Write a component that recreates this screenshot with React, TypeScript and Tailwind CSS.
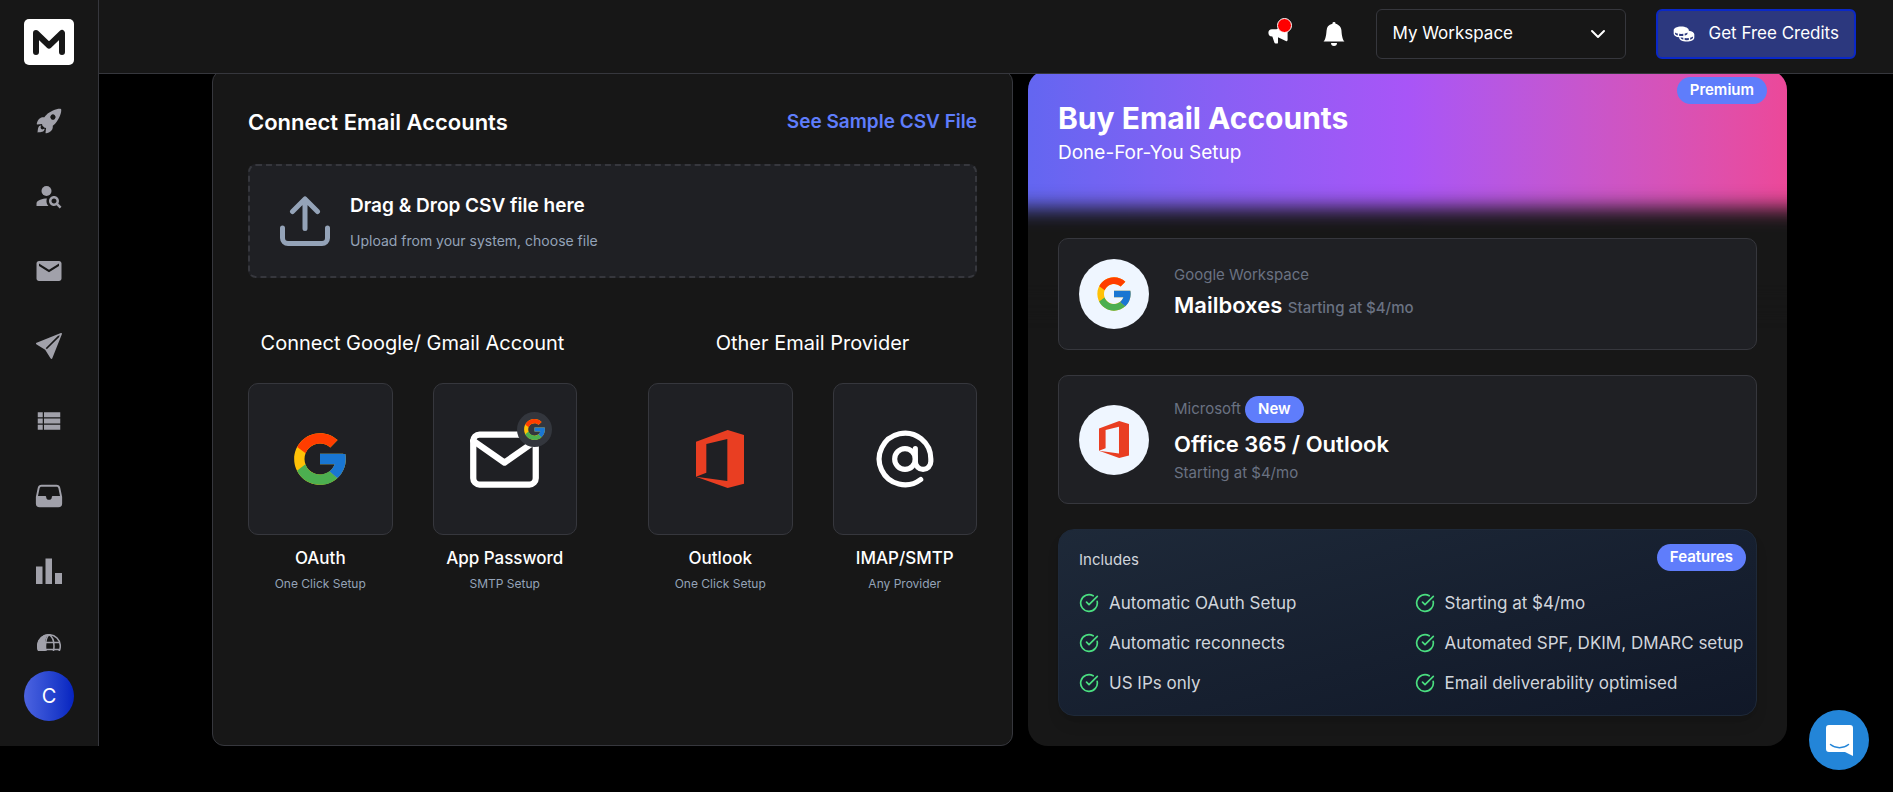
import React, { useState } from 'react';
import { CircleCheckBig } from 'lucide-react';
import { IoFileTray, IoRocketSharp } from 'react-icons/io5';
import { MdEmail, MdPersonSearch, MdViewList } from 'react-icons/md';
import { BsBellFill, BsFillSendFill } from 'react-icons/bs';
import { FiAtSign, FiChevronDown, FiMail } from 'react-icons/fi';
import { HiSpeakerphone } from 'react-icons/hi';
import { PiCoinsFill } from 'react-icons/pi';
import { FcGoogle } from 'react-icons/fc';

interface IconProps {
    className?: string;
}

function LogoIcon({ className }: IconProps) {
    return (
        <svg viewBox="0 0 50 46" className={className} fill="none" aria-hidden="true">
            <rect width="50" height="46" rx="5" fill="#fff" />
            <path
                d="M12 33V14l13 12.500 13-12.500v19"
                stroke="#171717"
                strokeWidth="6"
                strokeLinecap="round"
                strokeLinejoin="round"
            />
        </svg>
    );
}

function BarsIcon({ className }: IconProps) {
    return (
        <svg viewBox="0 0 26 26" className={className} fill="currentColor" aria-hidden="true">
            <path d="M0 8.500h6.500V26H0zM9.500 .5h6.500V26H9.500zM19 15h7v11h-7z" />
        </svg>
    );
}

function GlobeIcon({ className }: IconProps) {
    return (
        <svg viewBox="0 0 24 24" className={className} fill="none" stroke="currentColor" aria-hidden="true">
            <path d="M12 0a12 12 0 0 0-4 23.300V8C8.500 4.500 10 1.500 12 0z" fill="currentColor" stroke="none" />
            <circle cx="12" cy="12" r="11.300" strokeWidth="1.500" />
            <path d="M12 .7C9.500 3 8.500 6 8.500 12s1 9 3.500 11.300M12 .7c3.500 2 5 6 5 11.300s-1.500 9.300-5 11.300M8 8.500h15M8 15.500h15" strokeWidth="1.500" />
        </svg>
    );
}

function UploadIcon({ className }: IconProps) {
    return (
        <svg
            viewBox="0 0 50 50"
            className={className}
            fill="none"
            stroke="currentColor"
            strokeWidth="5"
            strokeLinecap="round"
            strokeLinejoin="round"
            aria-hidden="true"
        >
            <path d="M2.500 32v10a5.500 5.500 0 0 0 5.500 5.500h34a5.500 5.500 0 0 0 5.500-5.500V32" />
            <path d="M25 32.500V3M12.500 15.500 25 3l12.500 12.500" />
        </svg>
    );
}

function OfficeIcon({ className }: IconProps) {
    return (
        <svg viewBox="257 360 145 174" className={className} fill="#e93e22" aria-hidden="true">
            <path d="M257 395 352 360 402 375V521L352 534 257 500 351 513V387L288 402V488L257 500Z" />
        </svg>
    );
}

function ChatIcon({ className }: IconProps) {
    return (
        <svg viewBox="0 0 27 31" className={className} fill="none" aria-hidden="true">
            <path d="M3 0h21a3 3 0 0 1 3 3v28l-8-4H3a3 3 0 0 1-3-3V3a3 3 0 0 1 3-3z" fill="#fff" />
            <path d="M4.500 19.500c5 4.200 13 4.200 18 0" stroke="#2385d8" strokeWidth="1.500" strokeLinecap="round" />
        </svg>
    );
}

const navItems = [
    { label: 'Launch', icon: <IoRocketSharp className="size-7" /> },
    { label: 'Find leads', icon: <MdPersonSearch className="size-7.5" /> },
    { label: 'Email', icon: <MdEmail className="size-7.5" /> },
    { label: 'Campaigns', icon: <BsFillSendFill className="size-6.5" /> },
    { label: 'Lists', icon: <MdViewList className="size-7.5" /> },
    { label: 'Inbox', icon: <IoFileTray className="size-7.5" /> },
    { label: 'Analytics', icon: <BarsIcon className="size-6.5" /> },
    { label: 'Domains', icon: <GlobeIcon className="size-6" /> },
];

const providerGroups = [
    {
        title: 'Connect Google/ Gmail Account',
        options: [
            { name: 'OAuth', hint: 'One Click Setup', icon: <FcGoogle className="size-[62px]" /> },
            {
                name: 'App Password',
                hint: 'SMTP Setup',
                icon: (
                    <span className="relative">
                        <FiMail className="size-[75px]" />
                        <span className="absolute -top-2.5 -right-2.5 flex size-[35px] items-center justify-center rounded-full bg-[#33363d]">
                            <FcGoogle className="size-[25px]" />
                        </span>
                    </span>
                ),
            },
        ],
    },
    {
        title: 'Other Email Provider',
        options: [
            { name: 'Outlook', hint: 'One Click Setup', icon: <OfficeIcon className="h-[58px]" /> },
            { name: 'IMAP/SMTP', hint: 'Any Provider', icon: <FiAtSign className="size-[62px]" /> },
        ],
    },
];

const features = [
    'Automatic OAuth Setup',
    'Starting at $4/mo',
    'Automatic reconnects',
    'Automated SPF, DKIM, DMARC setup',
    'US IPs only',
    'Email deliverability optimised',
];

function Badge({ children, className = '' }: { children: React.ReactNode; className?: string }) {
    return (
        <span
            className={`inline-flex h-[27px] items-center rounded-full bg-[#5f7dfb] px-[13px] text-[15px] font-semibold text-white ${className}`}
        >
            {children}
        </span>
    );
}

function Sidebar() {
    return (
        <aside className="z-20 flex w-[99px] shrink-0 flex-col items-center border-r border-[#36373d] bg-[#171717] pt-[19px] pb-[25px]">
            <a href="#home" aria-label="Home">
                <LogoIcon className="h-[46px] w-[50px]" />
            </a>
            <nav className="mt-[18px] min-h-0 flex-1 basis-0 overflow-hidden">
                {navItems.map((item) => (
                    <a
                        key={item.label}
                        href="#nav"
                        aria-label={item.label}
                        className="flex h-[75px] w-[50px] items-center justify-center text-[#a1a1aa]"
                    >
                        {item.icon}
                    </a>
                ))}
            </nav>
            <button
                type="button"
                className="mt-5 size-[50px] rounded-full bg-linear-to-r from-[#4c63e0] to-[#0622c0] text-xl text-white"
            >
                C
            </button>
        </aside>
    );
}

function Header() {
    const [workspace, setWorkspace] = useState('My Workspace');

    return (
        <header className="sticky top-0 z-10 flex h-[74px] items-start justify-end border-b border-[#36373d] bg-[#171717] pt-[9px] pr-[37px] text-white">
            <div className="flex h-[50px] items-center">
                <button type="button" aria-label="Announcements" className="relative mr-8">
                    <HiSpeakerphone className="size-6" />
                    <span className="absolute -top-1 -right-0.5 size-[15px] rounded-full border border-white bg-[#ff0000]" />
                </button>
                <button type="button" aria-label="Notifications" className="mr-[30px]">
                    <BsBellFill className="size-6" />
                </button>
                <div className="relative mr-[30px]">
                    <select
                        aria-label="Workspace"
                        value={workspace}
                        onChange={(e) => setWorkspace(e.target.value)}
                        className="h-[50px] w-[250px] appearance-none rounded-md border border-[#36373d] bg-[#171717] pl-[15px] text-[17px]"
                    >
                        <option>My Workspace</option>
                    </select>
                    <FiChevronDown className="pointer-events-none absolute top-[13px] right-4 size-6" />
                </div>
                <button
                    type="button"
                    className="flex h-[50px] items-center gap-[13px] rounded-md border-2 border-[#0a28c8] bg-[#2c387e] px-[15px] text-[17px]"
                >
                    <PiCoinsFill className="size-[22px]" />
                    Get Free Credits
                </button>
            </div>
        </header>
    );
}

function ConnectPanel() {
    return (
        <section className="rounded-xl border border-[#36373d] bg-[#171717] p-[35px]">
            <div className="flex h-8 items-center justify-between">
                <h2 className="text-[22px] font-semibold">Connect Email Accounts</h2>
                <a href="#sample" className="text-[19px] font-semibold text-[#5f7dfb]">
                    See Sample CSV File
                </a>
            </div>

            <label className="mt-[26px] flex h-[114px] cursor-pointer items-center gap-5 rounded-lg border-2 border-dashed border-[#36373d] bg-[#1f2024] px-[30px]">
                <UploadIcon className="size-[50px] text-[#94a3b8]" />
                <span className="flex flex-col gap-[3px] pt-[5px]">
                    <span className="text-[19px] leading-8 font-semibold">Drag &amp; Drop CSV file here</span>
                    <span className="text-sm leading-8 text-[#94a3b8]">Upload from your system, choose file</span>
                </span>
                <input type="file" accept=".csv" className="hidden" />
            </label>

            <div className="mt-[49px] grid grid-cols-2 gap-[71px]">
                {providerGroups.map((group) => (
                    <div key={group.title}>
                        <h3 className="text-center text-xl leading-8 whitespace-nowrap">{group.title}</h3>
                        <div className="mt-6 grid grid-cols-2 gap-10">
                            {group.options.map((option) => (
                                <div key={option.name} className="text-center">
                                    <button
                                        type="button"
                                        aria-label={option.name}
                                        className="flex h-[152px] w-full items-center justify-center rounded-[10px] border border-[#36373d] bg-[#1f2024]"
                                    >
                                        {option.icon}
                                    </button>
                                    <p className="mt-[11px] text-[17px] leading-6 font-medium">{option.name}</p>
                                    <p className="mt-1 text-xs leading-5 text-[#94a3b8]">{option.hint}</p>
                                </div>
                            ))}
                        </div>
                    </div>
                ))}
            </div>
        </section>
    );
}

function BuyPanel() {
    return (
        <section className="relative isolate overflow-hidden rounded-[20px] bg-[#171717] p-[30px]">
            {/* Gradient banner that fades into the panel */}
            <div className="absolute inset-x-0 top-0 -z-10 h-[170px] bg-linear-to-r from-[#6366f1] via-[#a855f7] to-[#ec4899]" />
            <div className="absolute -inset-x-8 top-[138px] -z-10 h-24 bg-[#171717] blur-[10px]" />
            <Badge className="absolute top-[7px] right-5">Premium</Badge>

            <h2 className="text-3xl leading-9 font-bold">Buy Email Accounts</h2>
            <p className="mt-px text-[19px] leading-8">Done-For-You Setup</p>

            <div className="mt-[69px] flex flex-col gap-[25px]">
                <a href="#google" className="flex items-center gap-[25px] rounded-[10px] border border-[#36373d] bg-[#1f2024] p-5">
                    <span className="flex size-[70px] shrink-0 items-center justify-center rounded-full bg-blue-50">
                        <FcGoogle className="size-10" />
                    </span>
                    <span className="flex flex-col">
                        <span className="text-[15px] leading-6 text-gray-500">Google Workspace</span>
                        <span className="text-[22px] leading-9 font-semibold">
                            Mailboxes <span className="text-[15px] font-medium text-gray-500">Starting at $4/mo</span>
                        </span>
                    </span>
                </a>

                <a href="#microsoft" className="flex items-center gap-[25px] rounded-[10px] border border-[#36373d] bg-[#1f2024] p-5">
                    <span className="flex size-[70px] shrink-0 items-center justify-center rounded-full bg-blue-50">
                        <OfficeIcon className="h-[37px]" />
                    </span>
                    <span className="flex flex-col">
                        <span className="flex items-center gap-1 text-[15px] text-gray-500">
                            Microsoft <Badge>New</Badge>
                        </span>
                        <span className="mt-[3px] text-[22px] leading-9 font-semibold">Office 365 / Outlook</span>
                        <span className="mt-px text-[15px] leading-5 text-gray-500">Starting at $4/mo</span>
                    </span>
                </a>

                <div className="relative rounded-2xl border border-gray-800 bg-linear-to-br from-gray-800 to-gray-900 px-5 pt-5 pb-[19px] text-gray-300 shadow-lg">
                    <Badge className="absolute top-[14px] right-2.5">Features</Badge>
                    <h3 className="text-[15px] leading-5">Includes</h3>
                    <ul className="mt-5 grid grid-cols-2 gap-x-3.5 gap-y-3.5">
                        {features.map((feature) => (
                            <li key={feature} className="flex items-center gap-2.5 text-[17px] leading-[26px] whitespace-nowrap">
                                <CircleCheckBig className="size-5 shrink-0 text-[#4ade80]" />
                                {feature}
                            </li>
                        ))}
                    </ul>
                </div>
            </div>
        </section>
    );
}

export default function App() {
    return (
        <div className="min-h-screen bg-black pb-[46px] font-[Inter,sans-serif] text-white">
            <div className="flex">
                <Sidebar />
                <div className="min-w-0 flex-1">
                    <Header />
                    <main className="-mt-1 grid grid-cols-[801fr_759fr] gap-[15px] pr-[106px] pl-[113px]">
                        <ConnectPanel />
                        <BuyPanel />
                    </main>
                </div>
            </div>
            <button
                type="button"
                aria-label="Open chat"
                className="fixed right-6 bottom-[22px] z-30 flex size-[60px] items-center justify-center rounded-full bg-[#2385d8]"
            >
                <ChatIcon className="h-[31px] w-[27px]" />
            </button>
        </div>
    );
}
